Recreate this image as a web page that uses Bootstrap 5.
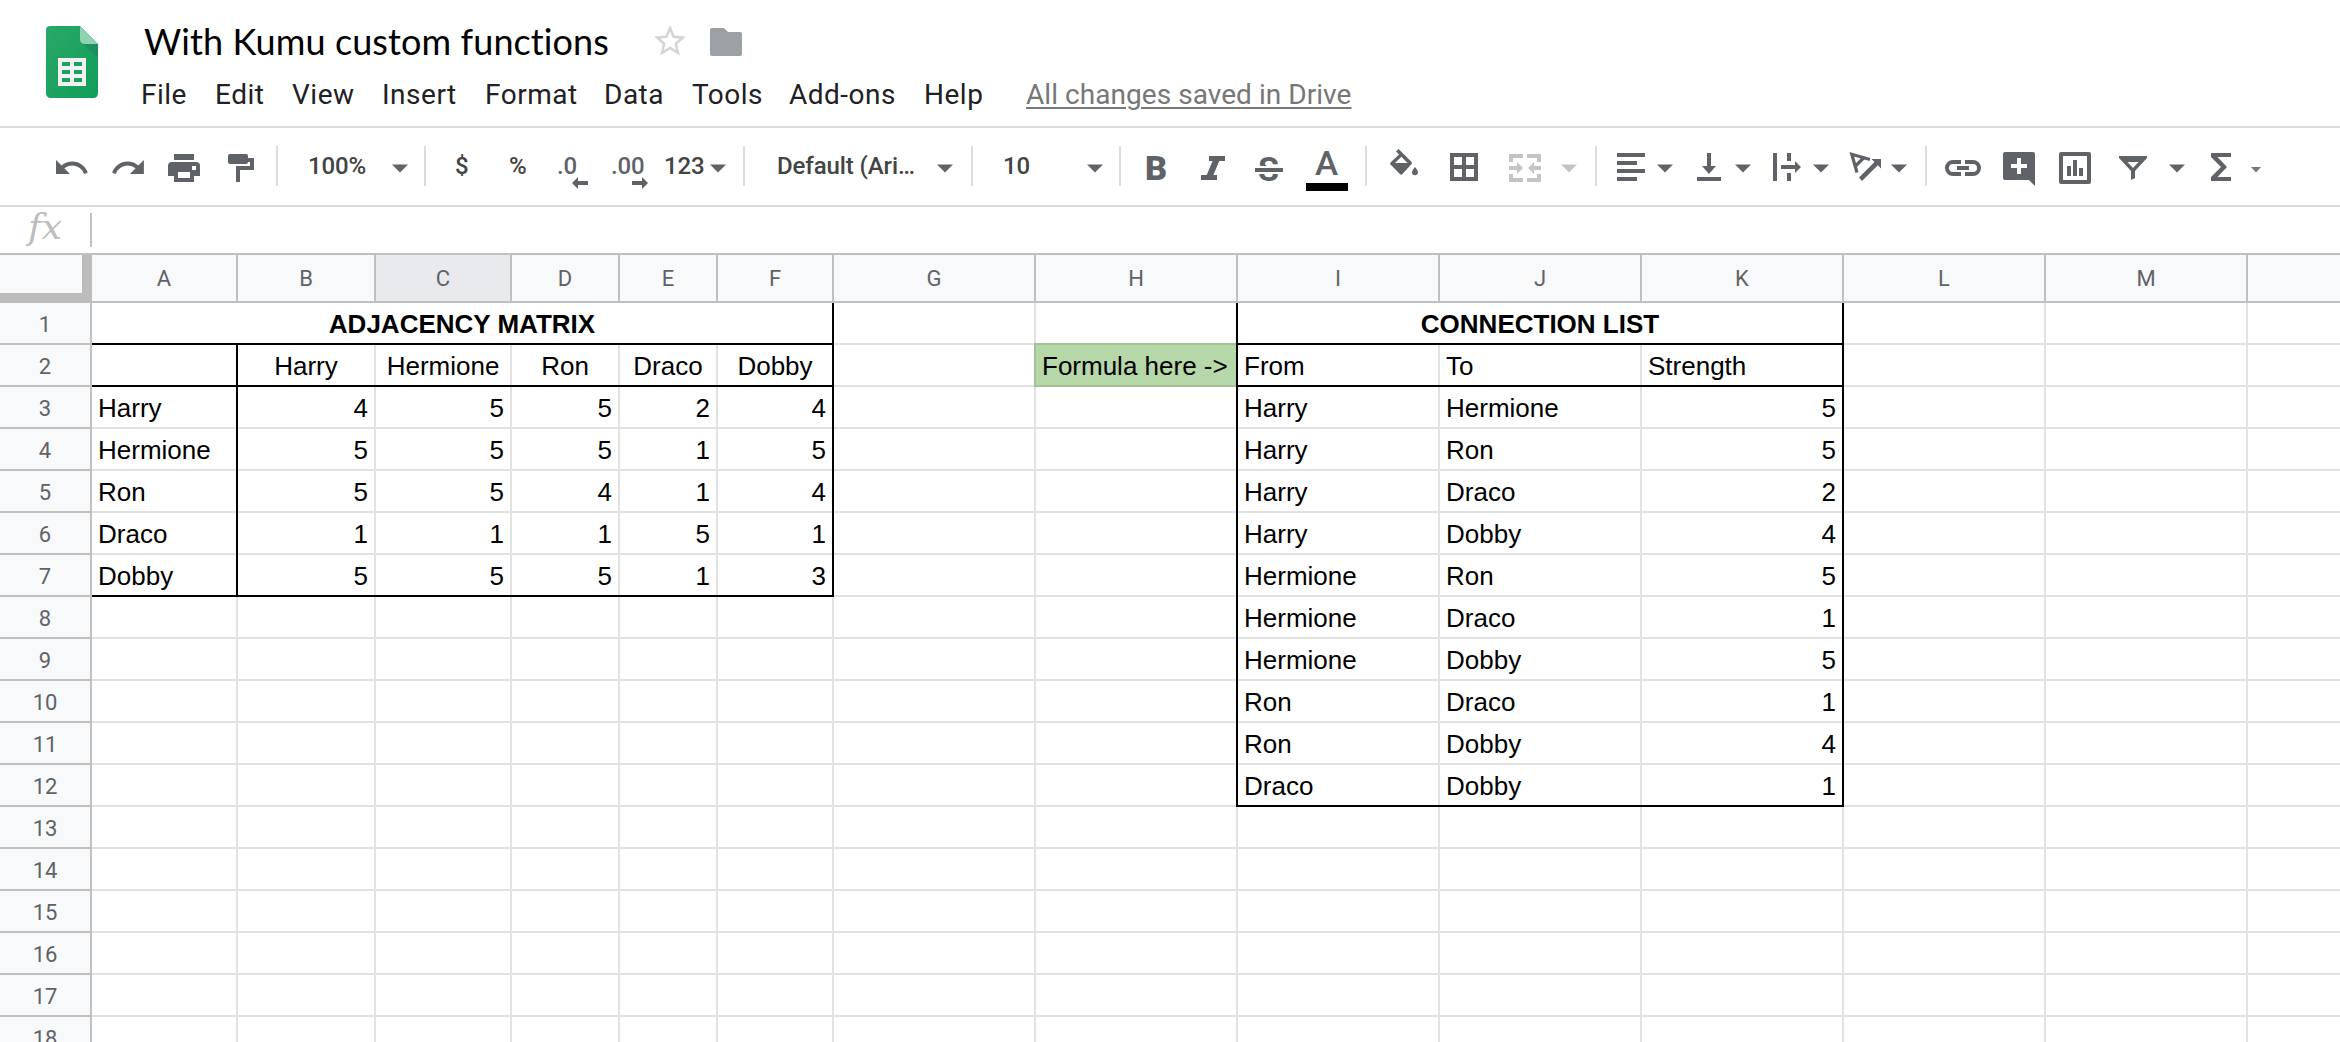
<!DOCTYPE html>
<html lang="en">
<head>
<meta charset="utf-8">
<title>With Kumu custom functions</title>
<link rel="stylesheet" href="https://cdn.jsdelivr.net/npm/bootstrap@5.3.0/dist/css/bootstrap.min.css">
<style>
body{font-family:Roboto,Arial,sans-serif;width:2340px;height:1042px;line-height:1.2}
svg{display:block;overflow:visible;fill:#5f6368}
.top-bar{height:128px;border-bottom:2px solid #dadce0;padding:0 0 0 46px}
.logo-art{margin-top:26px}
.head-text{padding-left:43px}
.doc-line{height:76px;padding-top:17px;gap:44px}
.doc-name{font-family:Lato,"Open Sans",sans-serif;font-size:36px;font-variant-ligatures:none;letter-spacing:.1px;line-height:48px;color:#000;width:466px;white-space:nowrap;margin:0 -1px 0 3px}
.doc-icons{gap:24px;padding-top:8px;padding-left:1px}
.menu-line{display:grid;grid-template-columns:74px 77px 90px 103px 119px 88px 97px 135px 102px auto;font-size:28px;line-height:38px;color:#202124;letter-spacing:.5px;white-space:nowrap}
.saved{color:#777;text-decoration:underline;text-decoration-thickness:2px;text-underline-offset:3px;letter-spacing:.05px}
.tool-line{display:grid;grid-template-columns:56px 56px 60px 48px 32px 84px 32px 31px 54px 49px 53px 53px 46px 33px 34px 160px 34px 32px 84px 32px 28px 54px 54px 51px 59px 25px 60px 59px 52px 34px 22px 40px 40px 38px 38px 40px 37px 41px 34px 20px 58px 56px 60px 50px 42px 40px 16px;height:79px;padding:18px 0 0 56px;border-bottom:2px solid #dadce0;font-size:24px;font-weight:500;color:#444;letter-spacing:-.1px;line-height:41px;white-space:nowrap}
.tool-line>*{height:40px}
.split{width:2px;background:#dadce0}
.fx-line{height:48px;border-bottom:2px solid #c0c0c0}
.fx-mark{width:90px;height:44px}
.fx-split{width:2px;height:34px;margin-top:6px;background:#c0c0c0}
.sheet-grid{table-layout:fixed;width:2450px;border-collapse:separate;border-spacing:0;font-family:"Liberation Sans",Arial,sans-serif;font-size:26px;line-height:30px;color:#000}
.sheet-grid td,.sheet-grid th{--r:#e2e2e2;--b:#e2e2e2;height:42px;padding:2px 8px 2px 6px;white-space:nowrap;overflow:hidden;box-shadow:inset -2px 0 var(--r),inset 0 -2px var(--b)}
.sheet-grid th{--r:#c0c0c0;--b:#c0c0c0;background:#f8f9fa;font:400 22px/26px Roboto,Arial,sans-serif;color:#5f6368;text-align:center;padding:3px 2px 2px 0}
.sheet-grid thead th{height:48px;padding:1px 2px 1px 0}
.sheet-grid th.picked{background:#e8eaed}
.sheet-grid th.corner{box-shadow:inset -10px -10px #bcbcbc}
.sheet-grid td.rb{--r:#000}
.sheet-grid td.bb{--b:#000;box-shadow:inset 0 -2px var(--b),inset -2px 0 var(--r)}
.sheet-grid td.tag{background:#b6d7a8;--b:#a3c197;position:relative;overflow:visible}
.sheet-grid td.tag::before{content:"";position:absolute;inset:-2px 2px 0 -2px;border:2px solid #a3c197;border-right:0}
</style>
<script src="https://cdn.jsdelivr.net/npm/bootstrap@5.3.0/dist/js/bootstrap.bundle.min.js"></script>
</head>
<body class="bg-white overflow-hidden">
<header class="top-bar d-flex align-items-start">
  <svg class="logo-art flex-shrink-0" width="52" height="72" viewBox="0 0 52 72">
    <defs><linearGradient id="leaf" x1="0" y1="0" x2="1" y2="1"><stop offset="0" stop-color="#2aa868"/><stop offset="1" stop-color="#109d58"/></linearGradient></defs>
    <path fill="url(#leaf)" d="M4 0h30l18 18v49.500a4.500 4.500 0 0 1-4.500 4.500h-43A4.500 4.500 0 0 1 0 67.500V4a4 4 0 0 1 4-4z"/>
    <path fill="#1f8f63" d="M36 17l16 15V18z"/>
    <path fill="#8fd2b0" d="M34 0l18 18H38.500a4.500 4.500 0 0 1-4.500-4.500z"/>
    <path fill="#f1f1f1" fill-rule="evenodd" d="M12 32h28v28H12zM16 36v4h8v-4zM28 36v4h8v-4zM16 44v4h8v-4zM28 44v4h8v-4zM16 52v4h8v-4zM28 52v4h8v-4z"/>
  </svg>
  <div class="head-text">
    <div class="doc-line d-flex">
      <div class="doc-name">With Kumu custom functions</div>
      <div class="doc-icons d-flex">
        <svg width="32" height="32" viewBox="2 2 20 20"><path fill="#d5d5d5" d="M22 9.240l-7.190-.62L12 2 9.190 8.630 2 9.240l5.460 4.730L5.820 21 12 17.270 18.180 21l-1.630-7.030L22 9.240zM12 15.400l-3.760 2.270 1-4.280-3.320-2.880 4.380-.38L12 6.100l1.710 4.040 4.380.38-3.320 2.880 1 4.280L12 15.400z"/></svg>
        <svg width="32" height="31" viewBox="0 -3 32 31"><path fill="#9aa0a3" d="M2 0h12l4 4h12a2 2 0 0 1 2 2v20a2 2 0 0 1-2 2H2a2 2 0 0 1-2-2V2a2 2 0 0 1 2-2z"/></svg>
      </div>
    </div>
    <nav class="menu-line"><span>File</span><span>Edit</span><span>View</span><span>Insert</span><span>Format</span><span>Data</span><span>Tools</span><span>Add-ons</span><span>Help</span><span class="saved">All changes saved in Drive</span></nav>
  </div>
</header>

<svg width="0" height="0" class="position-absolute"><symbol id="down" viewBox="0 0 16 40" overflow="visible"><path d="M0 18.500h16l-8 8z"/></symbol></svg>
<div class="tool-line">
  <svg width="32" height="40"><path transform="translate(-3.100 3.150) scale(1.55)" d="M12.500 8c-2.650 0-5.050.99-6.900 2.600L2 7v9h9l-3.620-3.620c1.390-1.160 3.160-1.880 5.120-1.880 3.540 0 6.550 2.310 7.600 5.500l2.370-.78C21.080 11.030 17.150 8 12.500 8z"/></svg>
  <svg width="32" height="40"><path transform="translate(-2.200 3.150) scale(1.55)" d="M18.400 10.600C16.550 8.990 14.150 8 11.500 8c-4.650 0-8.580 3.030-9.960 7.220L3.900 16c1.050-3.190 4.050-5.500 7.600-5.500 1.950 0 3.730.72 5.120 1.880L13 16h9V7l-3.600 3.600z"/></svg>
  <svg width="32" height="40"><path fill-rule="evenodd" d="M6 8h20v6H6zM4 16h24a4 4 0 0 1 4 4v10h-6v6H6v-6H0V20a4 4 0 0 1 4-4zM10 26v6h12v-6zM24 20v4h4v-4z"/></svg>
  <svg width="26" height="40"><path d="M2 8h16a2 2 0 0 1 2 2v2h6v12H12v12H8V20h14v-4h-2a2 2 0 0 1-2 2H2a2 2 0 0 1-2-2v-6a2 2 0 0 1 2-2z"/></svg>
  <i class="split"></i>
  <span>100%</span>
  <svg width="16" height="40"><use href="#down"/></svg>
  <i class="split"></i>
  <span>$</span>
  <span>%</span>
  <svg width="30" height="40"><text x="-1" y="28" font-size="24">.0</text><path d="M14 37l6-6v4h10v4H20v4z"/></svg>
  <svg width="37" height="40"><text x="0" y="28" font-size="24">.00</text><path d="M37 37l-6-6v4H21v4h10v4z"/></svg>
  <span>123</span>
  <svg width="16" height="40"><use href="#down"/></svg>
  <i class="split"></i>
  <span>Default (Ari…</span>
  <svg width="16" height="40"><use href="#down"/></svg>
  <i class="split"></i>
  <span>10</span>
  <svg width="16" height="40"><use href="#down"/></svg>
  <i class="split"></i>
  <svg width="20" height="40"><text x="-2" y="34" font-size="33.500" font-weight="900" textLength="22" lengthAdjust="spacingAndGlyphs">B</text></svg>
  <svg width="24" height="40"><path d="M8 10h16v5h-5.700l-5.900 14H16v5H0v-5h5.700l5.900-14H8z"/></svg>
  <svg width="28" height="40"><text x="3" y="34.500" font-size="34" font-weight="700">S</text><path fill="#fff" d="M0 20h28v8H0z"/><path d="M0 22h28v4H0z"/></svg>
  <svg width="42" height="40"><text x="9" y="29" font-size="33" font-weight="500" textLength="23" lengthAdjust="spacingAndGlyphs">A</text><path fill="#000" d="M0 37h42v8H0z"/></svg>
  <i class="split"></i>
  <svg width="28" height="40"><path fill-rule="evenodd" d="M6 5.500L8.600 3l13 13a1.500 1.500 0 0 1 0 2L12.500 28a1.800 1.800 0 0 1-2.600 0L.5 18.600a1.500 1.500 0 0 1 0-2.100L9 8.500zM11.300 10.800L5 17h12.500z"/><path d="M25 21s3 3.400 3 5.300a3 3 0 0 1-6 0c0-1.900 3-5.300 3-5.300z"/></svg>
  <svg width="28" height="40"><path fill-rule="evenodd" d="M0 7h28v28H0zM4 11v8h8v-8zM16 11v8h8v-8zM4 23v8h8v-8zM16 23v8h8v-8z"/></svg>
  <svg width="32" height="40"><path fill="#c4c4c4" d="M0 8h14v4H4v4H0zM32 8H18v4h10v4h4zM0 36h14v-4H4v-4H0zM32 36H18v-4h10v-4h4zM0 20h8v-4l6 6-6 6v-4H0zM32 20h-7v-4l-6 6 6 6v-4h7z"/></svg>
  <svg width="16" height="40"><path fill="#c4c4c4" d="M0 18.500h16l-8 8z"/></svg>
  <i class="split"></i>
  <svg width="28" height="40"><path d="M0 7h28v4H0zM0 15h20v4H0zM0 23h28v4H0zM0 31h20v4H0z"/></svg>
  <svg width="16" height="40"><use href="#down"/></svg>
  <svg width="24" height="40"><path d="M10 7h4v13h5l-7 8-7-8h5zM0 31h24v4H0z"/></svg>
  <svg width="16" height="40"><use href="#down"/></svg>
  <svg width="28" height="40"><path d="M0 7h4v28H0zM14 7h4v8h-4zM14 27h4v8h-4zM8 19h14v-4l6 6-6 6v-4H8z"/></svg>
  <svg width="16" height="40"><use href="#down"/></svg>
  <svg width="31" height="40"><path fill="none" stroke="#5f6368" stroke-width="3.200" d="M7 26.500L1.800 8.300 20 13.500M13.500 12L5.500 20"/><path d="M9 31.500l15.500-15.500-3-3H31v9.500l-3.200-3.200L12 35z"/></svg>
  <svg width="16" height="40"><use href="#down"/></svg>
  <i class="split"></i>
  <svg width="36" height="40"><path d="M16 14v4H8a4 4 0 0 0 0 8h8v4H8a8 8 0 0 1 0-16zM20 14h8a8 8 0 0 1 0 16h-8v-4h8a4 4 0 0 0 0-8h-8zM12 20h12v4H12z"/></svg>
  <svg width="32" height="40"><path fill-rule="evenodd" d="M2 6h28a2 2 0 0 1 2 2v32l-6-6H2a2 2 0 0 1-2-2V8a2 2 0 0 1 2-2zM14 12v6H8v4h6v6h4v-6h6v-4h-6v-6z"/></svg>
  <svg width="32" height="40"><path fill-rule="evenodd" d="M2 6h28a2 2 0 0 1 2 2v28a2 2 0 0 1-2 2H2a2 2 0 0 1-2-2V8a2 2 0 0 1 2-2zM4 10v24h24V10zM8 20h4v10H8zM14 14h4v16h-4zM20 22h4v8h-4z"/></svg>
  <svg width="28" height="40"><path fill-rule="evenodd" d="M0 10h28v2L16 25v7l-4 2v-9L0 12zM8.500 16l5.500 6 5.500-6z"/></svg>
  <svg width="16" height="40"><use href="#down"/></svg>
  <svg width="20" height="40"><path d="M0 7h20v4H6.500l9.500 10-9.500 10H20v4H0v-4l10-10L0 11z"/></svg>
  <svg width="10" height="40"><path fill="#777" d="M0 21h10l-5 5.500z"/></svg>
</div>

<div class="fx-line d-flex">
  <svg class="fx-mark" width="90" height="44"><text x="28" y="32" font-family="DejaVu Serif" font-style="italic" font-size="36" textLength="34" lengthAdjust="spacingAndGlyphs" fill="#bdbdbd">fx</text></svg>
  <div class="fx-split"></div>
</div>

<table class="sheet-grid" id="sheet"></table>

<script>
const widths = {A:146,B:138,C:136,D:108,E:98,F:116,G:202,H:202,I:202,J:202,K:202,L:202,M:202,'':202};
const cols = Object.keys(widths);
const names = ['Harry','Hermione','Ron','Draco','Dobby'];
const scores = [[4,5,5,2,4],[5,5,5,1,5],[5,5,4,1,4],[1,1,1,5,1],[5,5,5,1,3]];
const cells = {A1:'ADJACENCY MATRIX', I1:'CONNECTION LIST', H2:'Formula here ->', I2:'From', J2:'To', K2:'Strength'};
names.forEach((n, i) => {
  cells[cols[i + 1] + 2] = n;
  cells['A' + (i + 3)] = n;
  scores[i].forEach((v, j) => cells[cols[j + 1] + (i + 3)] = v);
});
[['Harry','Hermione',5],['Harry','Ron',5],['Harry','Draco',2],['Harry','Dobby',4],['Hermione','Ron',5],['Hermione','Draco',1],['Hermione','Dobby',5],['Ron','Draco',1],['Ron','Dobby',4],['Draco','Dobby',1]]
  .forEach((link, i) => link.forEach((v, j) => cells['IJK'[j] + (i + 3)] = v));
const isIn = (c, set) => c !== '' && set.includes(c);

let html = '<colgroup><col style="width:92px">' + cols.map(c => `<col style="width:${widths[c]}px">`).join('') + '</colgroup>';
html += '<thead><tr><th class="corner"></th>' + cols.map(c => `<th${c === 'C' ? ' class="picked"' : ''}>${c}</th>`).join('') + '</tr></thead><tbody>';
for (let r = 1; r <= 18; r++) {
  html += `<tr><th>${r}</th>`;
  for (const c of cols) {
    if (r === 1 && isIn(c, 'BCDEFJK')) continue;
    const v = cells[c + r] ?? '', cls = [];
    const span = r === 1 ? {A:6, I:3}[c] : 0;
    if (r <= 7 && isIn(c, 'AF')) cls.push('rb');
    if (r <= 12 && isIn(c, 'HK') || c + r === 'I1') cls.push('rb');
    if (isIn(c, 'ABCDEF') && [1, 2, 7].includes(r) || isIn(c, 'IJK') && [1, 2, 12].includes(r)) cls.push('bb');
    if (span) cls.push('text-center', 'fw-bold');
    else if (r === 2 && isIn(c, 'BCDEF')) cls.push('text-center');
    else if (typeof v === 'number') cls.push('text-end');
    if (c + r === 'H2') cls.push('tag');
    html += `<td class="${cls.join(' ')}"${span ? ` colspan="${span}"` : ''}>${String(v).replace('>', '&gt;')}</td>`;
  }
  html += '</tr>';
}
document.getElementById('sheet').innerHTML = html + '</tbody>';
</script>
</body>
</html>
